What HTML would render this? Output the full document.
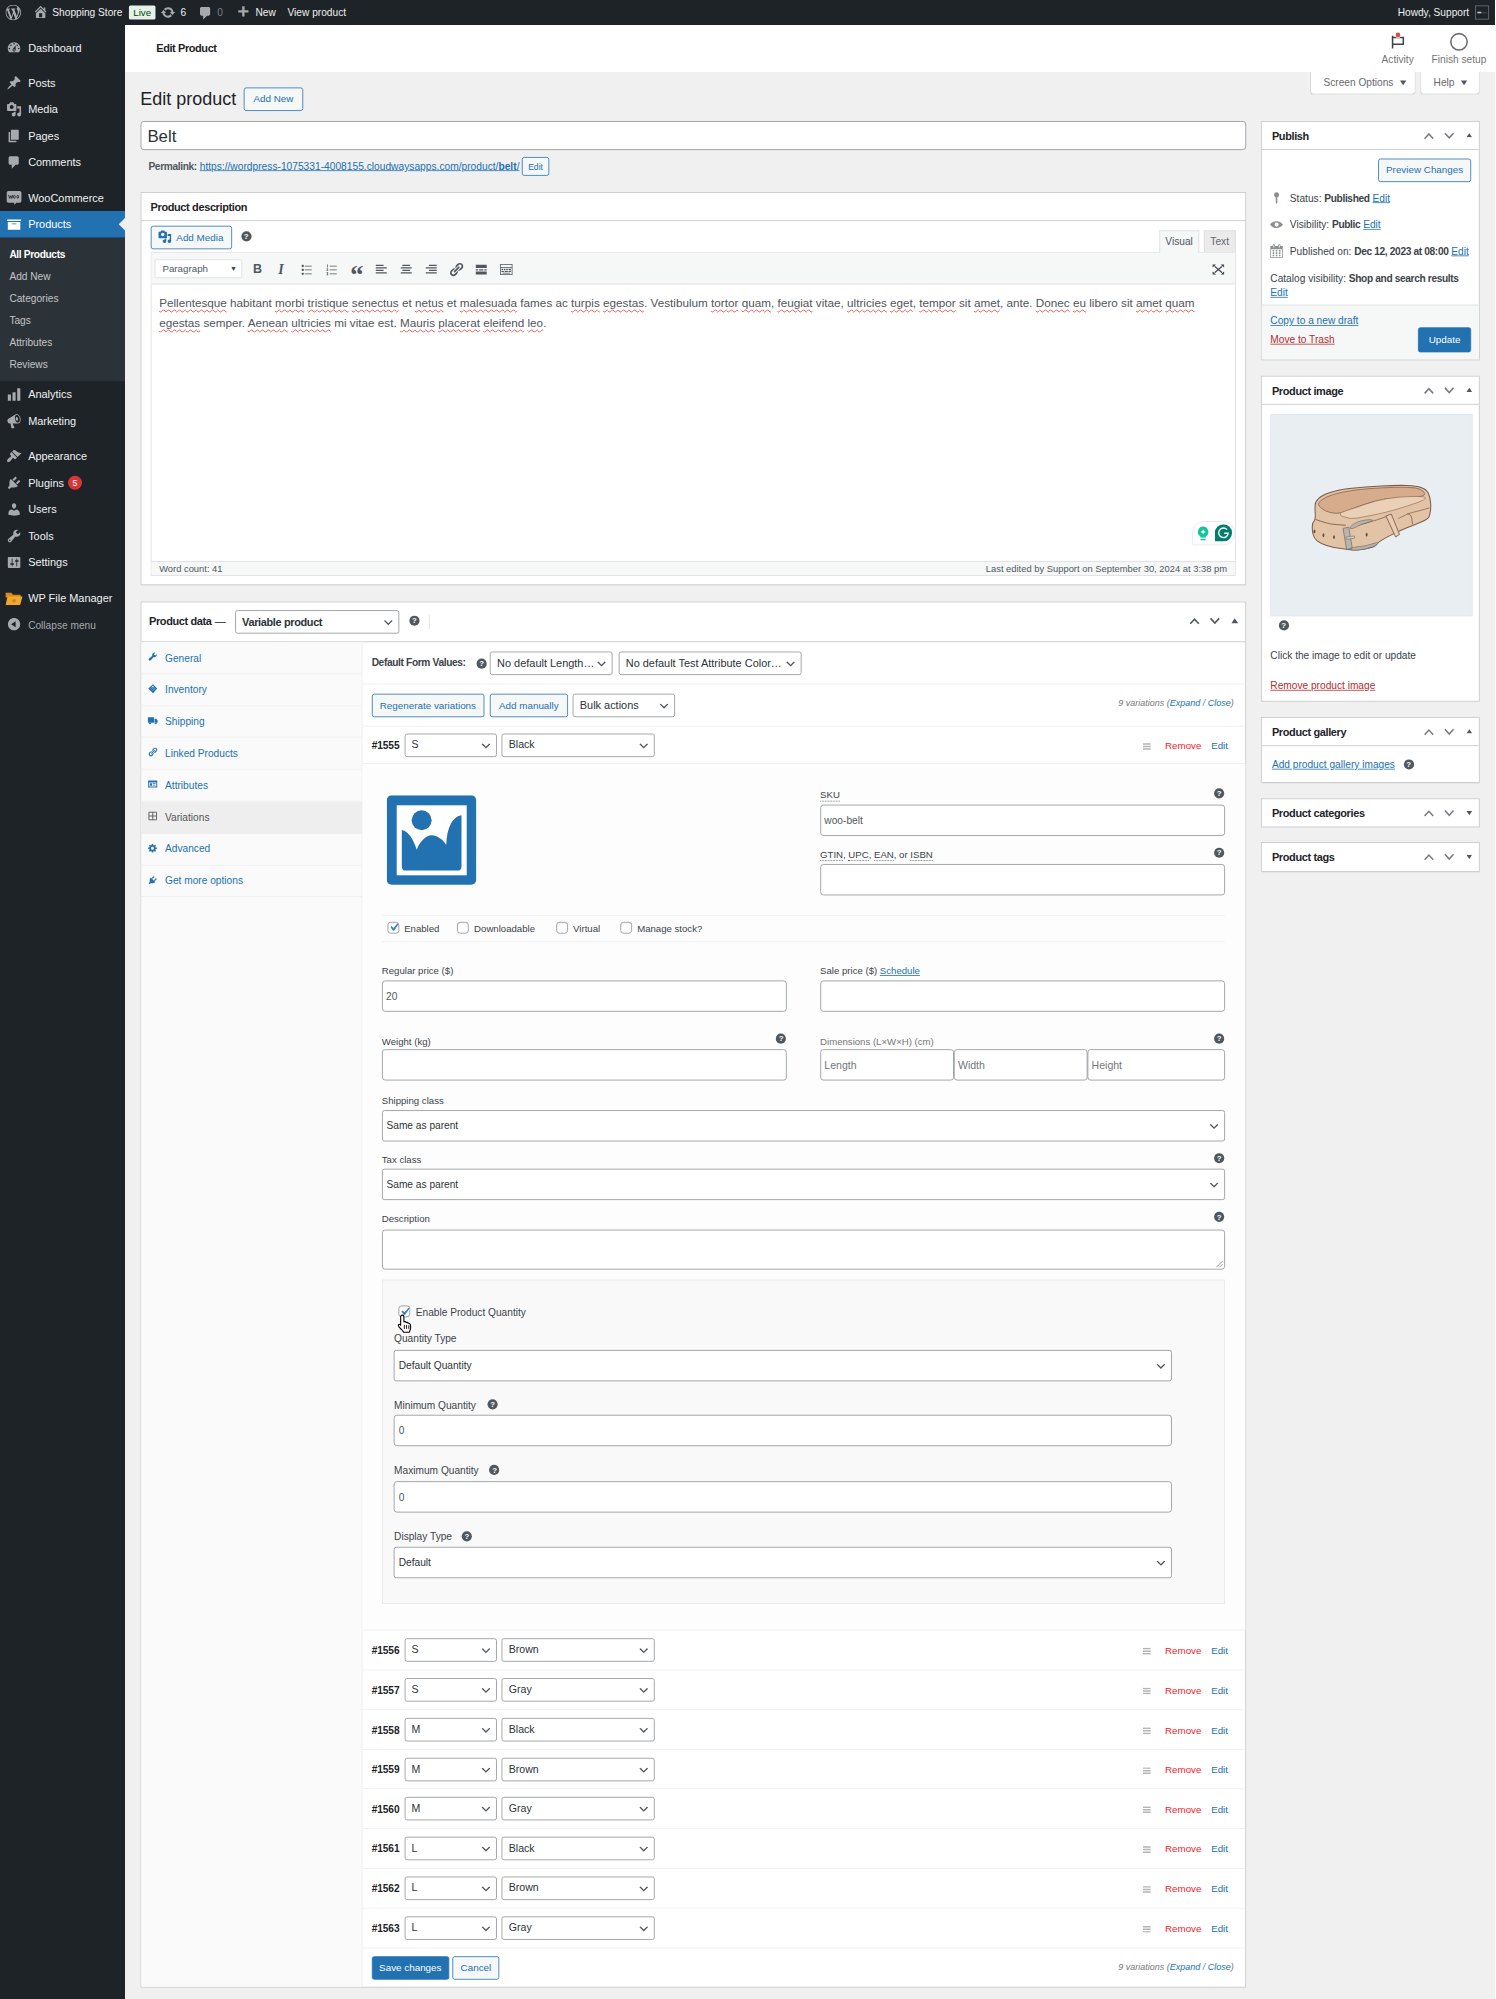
<!DOCTYPE html>
<html lang="en">
<head>
<meta charset="utf-8">
<title>Edit product "Belt" - Shopping Store - WordPress</title>
<style>
html,body{margin:0;padding:0}
body{width:1496px;height:1999px;overflow:hidden;background:#f0f0f1;position:relative}
#scale{position:relative;width:1915px;height:2559px;transform:scale(.78125);transform-origin:0 0;overflow:hidden;background:#f0f0f1;font-family:"Liberation Sans",sans-serif;font-size:13px;line-height:1.4;color:#3c434a}
#scale *{box-sizing:border-box}
a{color:#2271b1;text-decoration:underline}
.abs{position:absolute}
svg{display:block}
.dd{display:inline-block;width:0;height:0;border-left:4.500px solid transparent;border-right:4.500px solid transparent;border-top:6px solid #50575e;margin-left:5px;position:relative;top:-1px}
b,.ph,.bd{font-weight:bold;letter-spacing:-.45px}
#edtxt u{text-decoration:underline wavy #f5392f;text-decoration-thickness:1.300px;text-underline-offset:2.500px;text-decoration-skip-ink:none}
/* admin bar */
#wpadminbar{position:absolute;left:0;top:0;width:1915px;height:32px;background:#1d2327;color:#f0f0f1;font-size:13px;line-height:32px;white-space:nowrap}
#wpadminbar .t{position:absolute;top:0;height:32px;line-height:34px}
#wpadminbar svg{position:absolute;fill:#a7aaad}
/* sidebar */
#adminmenu{position:absolute;left:0;top:32px;width:160px;height:2527px;background:#1d2327;padding-top:12px}
.mi{position:relative;height:34px;color:#f0f0f1;font-size:14px;line-height:18px;padding:8px 0 8px 36px;white-space:nowrap}
.mi svg{position:absolute;left:8px;top:7px;width:20px;height:20px;fill:#a7aaad}
.mi.cur{background:#2271b1;color:#fff}
.mi.cur svg{fill:#fff}
.mi.cur:after{content:"";position:absolute;right:0;top:9px;border:8px solid transparent;border-right-color:#f0f0f1}
.sep{height:11px}
.sub{background:#2c3338;padding:7px 0 8px}
.sub div{font-size:13px;line-height:18.2px;padding:6.300px 12px 3.700px;color:#c3c4c7;height:28.2px}
.sub div.on{color:#fff;font-weight:bold;letter-spacing:-.45px}
.badge{display:inline-block;background:#d63638;color:#fff;font-size:11px;line-height:18px;height:18px;min-width:18px;border-radius:9px;text-align:center;margin:0 0 0 5px;vertical-align:top;padding:0 5px}
/* generic */
.postbox{position:absolute;background:#fff;border:1px solid #c3c4c7;box-shadow:0 1px 1px rgba(0,0,0,.04)}
.ph{position:relative;height:36px;border-bottom:1px solid #c3c4c7;font-size:14px;font-weight:bold;color:#1d2327;line-height:19px;padding:9.300px 12px 0}
.side .ph{padding-left:13px}
.ph.closed{border-bottom:0}
.hd{position:absolute;top:0;height:35px}
.hd svg{position:absolute;top:10px}
.btn{position:absolute;border:1px solid #2271b1;border-radius:3px;background:#f6f7f7;color:#2271b1;font-size:12.600px;line-height:28px;height:30px;text-align:center;white-space:nowrap}
.btn.pri{background:#2271b1;color:#fff}
.inp{position:absolute;border:1px solid #8c8f94;border-radius:4px;background:#fff;color:#2c3338;font-size:14px;white-space:nowrap;overflow:hidden}
.sel{position:absolute;border:1px solid #8c8f94;border-radius:3px;background:#fff;color:#2c3338;font-size:14px;line-height:28px;height:30px;padding:0 24px 0 8px;white-space:nowrap;overflow:hidden}
.sel svg{position:absolute;right:5px;top:50%;margin-top:-7px;width:16px;height:16px}
.lbl{position:absolute;font-size:12.300px;line-height:16px;color:#3c434a;white-space:nowrap}
.tip{position:absolute;width:13px;height:13px;border-radius:50%;background:#50575e;color:#fff;font-size:10px;font-weight:bold;line-height:13px;text-align:center}
.cb{position:absolute;width:15px;height:15px;border:1px solid #8c8f94;border-radius:4px;background:#fff;box-shadow:inset 0 1px 2px rgba(0,0,0,.1)}
.cb svg{position:absolute;left:-3.500px;top:-3.500px;width:20px;height:20px}
</style>
</head>
<body>
<div id="scale">

<!-- ============ ADMIN BAR ============ -->
<div id="wpadminbar">
  <svg style="left:7px;top:6px" width="20" height="20" viewBox="0 0 20 20"><path d="M20 10c0-5.51-4.49-10-10-10C4.48 0 0 4.49 0 10c0 5.52 4.48 10 10 10 5.51 0 10-4.48 10-10zM7.78 15.37L4.37 6.22c.55-.02 1.17-.08 1.17-.08.5-.06.44-1.13-.06-1.11 0 0-1.45.11-2.37.11-.18 0-.37 0-.58-.01C4.12 2.69 6.87 1.11 10 1.11c2.33 0 4.45.87 6.05 2.34-.68-.11-1.65.39-1.65 1.58 0 .74.45 1.36.9 2.1.35.61.55 1.36.55 2.46 0 1.49-1.4 5-1.4 5l-3.03-8.37c.54-.02.82-.17.82-.17.5-.05.44-1.25-.06-1.22 0 0-1.44.12-2.38.12-.87 0-2.33-.12-2.33-.12-.5-.03-.56 1.2-.06 1.22l.92.08 1.26 3.41zM17.41 10c.24-.64.74-1.87.43-4.25.7 1.29 1.05 2.71 1.05 4.25 0 3.29-1.73 6.24-4.4 7.78.97-2.59 1.94-5.2 2.92-7.78zM6.1 18.09C3.12 16.65 1.11 13.53 1.11 10c0-1.3.23-2.48.72-3.59C3.25 10.3 4.67 14.2 6.1 18.09zm4.03-6.63l2.58 6.98c-.86.29-1.76.45-2.71.45-.79 0-1.57-.11-2.29-.33.81-2.38 1.62-4.74 2.42-7.1z"/></svg>
  <svg style="left:42px;top:5px" width="20" height="20" viewBox="0 0 20 20"><path d="M16 8.5l1.53 1.53-1.06 1.06L10 4.62l-6.47 6.47-1.06-1.06L10 2.5l4 4v-2h2v4zm-6-2.46l6 5.99V18H4v-5.97zM12 17v-5H8v5h4z"/></svg>
  <span class="t" style="left:67px">Shopping Store</span>
  <span class="t" style="left:165px;top:7px;height:18px;line-height:18px;width:34px;text-align:center;background:#e6f2e8;color:#00450c;border-radius:2px;font-size:12.5px">Live</span>
  <svg style="left:205px;top:6px" width="20" height="20" viewBox="0 0 20 20"><path d="M10.2 3.28c3.53 0 6.43 2.61 6.92 6h2.08l-3.5 4-3.5-4h2.32c-.45-1.97-2.21-3.45-4.32-3.45-1.45 0-2.73.71-3.54 1.78L4.95 5.66C6.23 4.2 8.11 3.28 10.2 3.28zm-.4 13.44c-3.52 0-6.43-2.61-6.92-6H.8l3.5-4c1.17 1.33 2.33 2.67 3.5 4H5.48c.45 1.97 2.21 3.45 4.32 3.45 1.45 0 2.73-.71 3.54-1.78l1.71 1.95c-1.28 1.46-3.15 2.38-5.25 2.38z"/></svg>
  <span class="t" style="left:231px">6</span>
  <svg style="left:253px;top:7px" width="20" height="20" viewBox="0 0 20 20"><path d="M5 2h9c1.1 0 2 .9 2 2v7c0 1.1-.9 2-2 2h-2l-5 5v-5H5c-1.1 0-2-.9-2-2V4c0-1.1.9-2 2-2z"/></svg>
  <span class="t" style="left:278px;color:#a7aaad;opacity:.7">0</span>
  <svg style="left:301px;top:6px" width="20" height="20" viewBox="0 0 20 20"><path d="M17 7v3h-5v5H9v-5H4V7h5V2h3v5h5z"/></svg>
  <span class="t" style="left:327px">New</span>
  <span class="t" style="left:368px">View product</span>
  <span class="t" style="left:1789px">Howdy, Support</span>
  <div class="abs" style="left:1888px;top:7px;width:18px;height:18px;border:1px solid #70757a"><div class="abs" style="left:2px;top:7.500px;width:12px;height:1px;background:#50575e"></div><div class="abs" style="left:2px;top:7px;width:5px;height:2px;background:#c3c4c7"></div></div>
</div>

<!-- ============ SIDEBAR ============ -->
<div id="adminmenu">
  <div class="mi"><svg viewBox="0 0 20 20"><path d="M3.76 16h12.48c1.1-1.37 1.76-3.11 1.76-5 0-4.42-3.58-8-8-8s-8 3.58-8 8c0 1.89.66 3.63 1.76 5zM10 4c.55 0 1 .45 1 1s-.45 1-1 1-1-.45-1-1 .45-1 1-1zM6 6c.55 0 1 .45 1 1s-.45 1-1 1-1-.45-1-1 .45-1 1-1zm8 0c.55 0 1 .45 1 1s-.45 1-1 1-1-.45-1-1 .45-1 1-1zm-5.37 5.55L12 7v6c0 1.1-.9 2-2 2s-2-.9-2-2c0-.57.24-1.08.63-1.45zM4 10c.55 0 1 .45 1 1s-.45 1-1 1-1-.45-1-1 .45-1 1-1zm12 0c.55 0 1 .45 1 1s-.45 1-1 1-1-.45-1-1 .45-1 1-1zm-5 3c0-.55-.45-1-1-1s-1 .45-1 1 .45 1 1 1 1-.45 1-1z"/></svg>Dashboard</div>
  <div class="sep"></div>
  <div class="mi"><svg viewBox="0 0 20 20"><path d="M10.44 3.02l1.82-1.82 6.36 6.35-1.83 1.82c-1.05-.68-2.48-.57-3.41.36l-.75.75c-.92.93-1.04 2.35-.35 3.41l-1.83 1.82-2.41-2.41-2.8 2.79c-.42.42-3.38 2.71-3.8 2.29s1.86-3.39 2.28-3.81l2.79-2.79L4.1 9.36l1.83-1.82c1.05.69 2.48.57 3.4-.36l.75-.75c.93-.92 1.05-2.35.36-3.41z"/></svg>Posts</div>
  <div class="mi"><svg viewBox="0 0 20 20"><path d="M13 11V4c0-.55-.45-1-1-1h-1.67L9 1H5L3.67 3H2c-.55 0-1 .45-1 1v7c0 .55.45 1 1 1h10c.55 0 1-.45 1-1zM7 4.5c1.38 0 2.5 1.12 2.5 2.5S8.38 9.5 7 9.5 4.5 8.38 4.5 7 5.62 4.5 7 4.5zM14 6h5v10.5c0 1.38-1.12 2.5-2.5 2.5S14 17.880 14 16.5s1.12-2.5 2.5-2.5c.17 0 .34.02.5.05V9h-3V6zm-4 8.050V13h2v3.5c0 1.38-1.12 2.5-2.500 2.5S7 17.880 7 16.5 8.120 14 9.500 14c.17 0 .34.02.5.05z"/></svg>Media</div>
  <div class="mi"><svg viewBox="0 0 20 20"><path d="M6 15V2h10v13H6zm-1 1h8v2H3V5h2v11z"/></svg>Pages</div>
  <div class="mi"><svg viewBox="0 0 20 20"><path d="M5 2h9c1.1 0 2 .9 2 2v7c0 1.1-.9 2-2 2h-2l-5 5v-5H5c-1.1 0-2-.9-2-2V4c0-1.1.9-2 2-2z"/></svg>Comments</div>
  <div class="sep"></div>
  <div class="mi"><svg viewBox="0 0 20 20"><path d="M3 1.500h14c1.400 0 2.500 1.100 2.500 2.500v10c0 1.400-1.100 2.500-2.500 2.500h-4.500l-1.500 2.500-1.500-2.500H3c-1.400 0-2.500-1.100-2.500-2.500V4c0-1.400 1.100-2.500 2.500-2.500z"/><path d="M3 6.500l1.300 4.500 1.500-3.500 1.400 3.500 1-4.500M10.400 7c-1.500 0-1.500 3.800 0 3.800s1.500-3.800 0-3.800zM14.800 7c-1.500 0-1.500 3.800 0 3.800s1.500-3.800 0-3.800z" fill="none" stroke="#1d2327" stroke-width="1.100"/></svg>WooCommerce</div>
  <div class="mi cur"><svg viewBox="0 0 20 20"><path d="M19 4v2H1V4h18zM2 7h16v10H2V7zm11 3V9H7v1h6z"/></svg>Products</div>
  <div class="sub">
    <div class="on">All Products</div>
    <div>Add New</div>
    <div>Categories</div>
    <div>Tags</div>
    <div>Attributes</div>
    <div>Reviews</div>
  </div>
  <div class="mi"><svg viewBox="0 0 20 20"><path d="M18 18V2h-4v16h4zm-6 0V7H8v11h4zm-6 0v-8H2v8h4z"/></svg>Analytics</div>
  <div class="mi"><svg viewBox="0 0 20 20"><path d="M18.15 5.94c.46 1.62.38 3.22-.02 4.48-.42 1.28-1.26 2.18-2.3 2.48-.16.06-.26.06-.4.06-.06.02-.12.02-.18.02-.06.02-.14.02-.22.02h-6.8l2.22 5.5c.02.14-.06.26-.14.34-.08.1-.24.16-.34.16H6.950c-.1 0-.26-.06-.34-.16-.08-.08-.16-.2-.14-.34l-1-5.5H4.250l-.02-.02c-.5.06-1.08-.18-1.54-.62s-.88-1.08-1.06-1.88c-.24-.8-.2-1.56-.02-2.2.18-.62.58-1.08 1.06-1.3l.02-.02 9-5.4c.1-.06.18-.1.24-.16.06-.04.14-.08.24-.12.16-.08.28-.12.5-.18 1.04-.3 2.24.1 3.22.98s1.84 2.24 2.26 3.86zm-2.58 5.98h-.02c.4-.1.74-.34 1.04-.7.58-.7.86-1.76.86-3.04 0-.64-.1-1.3-.28-1.98-.34-1.36-1.02-2.5-1.78-3.24s-1.68-1.1-2.46-.88c-.82.22-1.4.96-1.7 2-.32 1.04-.28 2.36.06 3.72.38 1.36 1 2.5 1.8 3.24.78.74 1.62 1.1 2.48.88zm-2.54-7.08c.22-.04.42-.02.62.04.38.16.76.48 1.02 1s.42 1.2.42 1.78c0 .3-.04.56-.12.8-.18.48-.44.84-.86.94-.34.1-.8-.06-1.14-.4s-.64-.86-.78-1.5c-.18-.62-.12-1.24.02-1.72s.48-.84.82-.94z"/></svg>Marketing</div>
  <div class="sep"></div>
  <div class="mi"><svg viewBox="0 0 20 20"><path d="M14.48 11.06L7.41 3.99l1.5-1.5c.5-.56 2.3-.47 3.51.32 1.21.8 1.43 1.28 2.91 2.1 1.18.64 2.45 1.26 4.45.85zm-.71.71L6.7 4.7 4.93 6.47c-.39.39-.39 1.02 0 1.41l1.06 1.06c.39.39.39 1.03 0 1.42-.6.6-1.43 1.11-2.21 1.69-.35.26-.7.53-1.01.84C1.43 14.23.4 16.08 1.4 17.07c.99 1 2.84-.03 4.18-1.36.31-.31.58-.66.85-1.02.57-.78 1.08-1.61 1.69-2.21.39-.39 1.02-.39 1.41 0l1.06 1.06c.39.39 1.02.39 1.41 0z"/></svg>Appearance</div>
  <div class="mi"><svg viewBox="0 0 20 20"><path d="M13.11 4.36L9.87 7.6 8 5.73l3.24-3.24c.35-.34 1.05-.2 1.56.32.52.51.66 1.21.31 1.55zm-8 1.77l.91-1.12 9.01 9.01-1.19.84c-.71.71-2.63 1.16-3.82 1.16H6.14L4.9 17.26c-.59.59-1.54.59-2.12 0-.59-.58-.59-1.53 0-2.12l1.24-1.24v-3.88c0-1.13.4-3.19 1.09-3.89zm7.26 3.97l3.24-3.24c.34-.35 1.04-.21 1.55.31.52.51.66 1.21.31 1.55l-3.24 3.25z"/></svg>Plugins<span class="badge">5</span></div>
  <div class="mi"><svg viewBox="0 0 20 20"><path d="M10 9.25c-2.27 0-2.73-3.44-2.73-3.44C7 4.02 7.82 2 9.97 2c2.16 0 2.98 2.02 2.71 3.81 0 0-.41 3.44-2.68 3.44zm0 2.57L12.72 10c2.39 0 4.52 2.33 4.52 4.53v2.49s-3.65 1.13-7.24 1.13c-3.65 0-7.24-1.13-7.24-1.13v-2.49c0-2.25 1.94-4.48 4.47-4.48z"/></svg>Users</div>
  <div class="mi"><svg viewBox="0 0 20 20"><path d="M16.68 9.77c-1.34 1.34-3.3 1.67-4.95.99l-5.41 6.52c-.99.99-2.59.99-3.58 0s-.99-2.59 0-3.57l6.52-5.42c-.68-1.65-.35-3.61.99-4.95 1.28-1.28 3.12-1.62 4.72-1.06l-2.89 2.89 2.82 2.82 2.86-2.87c.53 1.58.18 3.39-1.08 4.65zM3.81 16.21c.4.39 1.04.39 1.43 0 .4-.4.4-1.04 0-1.43-.39-.4-1.03-.4-1.43 0-.39.39-.39 1.03 0 1.43z"/></svg>Tools</div>
  <div class="mi"><svg viewBox="0 0 20 20"><path d="M18 16V4c0-.55-.45-1-1-1H3c-.55 0-1 .45-1 1v12c0 .55.45 1 1 1h14c.55 0 1-.45 1-1zM8 11h1c.55 0 1 .45 1 1s-.45 1-1 1H8v1.5c0 .28-.22.5-.5.5s-.5-.22-.5-.5V13H6c-.55 0-1-.45-1-1s.45-1 1-1h1V5.500c0-.28.22-.5.5-.5s.5.22.5.5V11zm5-2h-1c-.55 0-1-.45-1-1s.45-1 1-1h1V5.500c0-.28.22-.5.5-.5s.5.22.5.5V7h1c.55 0 1 .45 1 1s-.45 1-1 1h-1v5.500c0 .28-.22.5-.5.5s-.5-.22-.5-.5V9z"/></svg>Settings</div>
  <div class="sep"></div>
  <div class="mi"><svg viewBox="0 0 20 20" style="left:6px;top:6px;width:24px;height:24px"><path d="M1 4h6l2 2h8v3H1z" fill="#d98a1f"/><path d="M3 8h16l-2.500 9H1z" fill="#f0a92f"/><circle cx="10" cy="12.500" r="2.200" fill="#d98a1f"/></svg>WP File Manager</div>
  <div class="mi" style="color:#a7aaad;font-size:13px;padding-top:10px"><svg viewBox="0 0 20 20"><path d="M10 2.160c4.33 0 7.84 3.51 7.84 7.84s-3.510 7.840-7.840 7.840S2.160 14.330 2.160 10 5.670 2.160 10 2.160zm2 11.720V6.120L6.180 9.970z"/></svg>Collapse menu</div>
</div>

<!-- ============ WC HEADER ============ -->
<div class="abs" style="left:160px;top:32px;width:1755px;height:60px;background:#fff">
  <div class="abs bd" style="left:40px;top:0;line-height:61px;font-size:14px;color:#1e1e1e;letter-spacing:-.5px">Edit Product</div>
  <svg class="abs" style="left:1617px;top:8px" width="24" height="24" viewBox="0 0 24 24"><path d="M5.500 5.700V22M5.500 8.100H19.200V16.700H5.500" fill="none" stroke="#3c434a" stroke-width="2"/><circle cx="12.400" cy="4.700" r="3.700" fill="#fff"/><circle cx="12.400" cy="4.700" r="3" fill="#dd4a4a"/></svg>
  <div class="abs" style="left:1589px;top:35.500px;width:80px;text-align:center;font-size:13px;line-height:16px;color:#757575">Activity</div>
  <div class="abs" style="left:1695.500px;top:10px;width:23px;height:23px;border:2px solid #6e6e6e;border-radius:50%"></div>
  <div class="abs" style="left:1657.500px;top:35.500px;width:100px;text-align:center;font-size:13px;line-height:16px;color:#757575">Finish setup</div>
</div>

<!-- ============ SCREEN META ============ -->
<div class="abs" style="left:1677px;top:92px;width:135px;height:29px;background:#fff;border:1px solid #c3c4c7;border-top:0;border-radius:0 0 4px 4px;font-size:13px;line-height:27px;color:#646970;padding-left:16px">Screen Options <span class="dd"></span></div>
<div class="abs" style="left:1818px;top:92px;width:76px;height:29px;background:#fff;border:1px solid #c3c4c7;border-top:0;border-radius:0 0 4px 4px;font-size:13px;line-height:27px;color:#646970;padding-left:16px">Help <span class="dd"></span></div>

<!-- ============ HEADING ============ -->
<div class="abs" style="left:179.500px;top:112px;font-size:23px;line-height:30px;color:#1d2327;white-space:nowrap">Edit product</div>
<div class="btn" style="left:312px;top:112px;width:76px;height:30px;line-height:28px">Add New</div>

<div class="inp" style="left:179.700px;top:155px;width:1415px;height:37px;font-size:21.500px;line-height:38.500px;padding:0 8px;color:#2c3338">Belt</div>
<div class="abs" style="left:190px;top:201.300px;line-height:24px;font-size:13px;color:#646970;white-space:nowrap"><b style="font-weight:bold;color:#50575e">Permalink:</b> <a style="font-size:13.080px">https://wordpress-1075331-4008155.cloudwaysapps.com/product/<span style="font-weight:bold">belt</span>/</a></div>
<div class="btn" style="left:668px;top:201px;width:35px;height:24px;line-height:22px;font-size:11px">Edit</div>

<!-- ============ PRODUCT DESCRIPTION ============ -->
<div class="postbox" style="left:179.700px;top:246px;width:1415px;height:503px">
  <div class="ph">Product description</div>
  <div class="btn" style="left:12px;top:42px;width:104px;height:30px;text-align:left;padding-left:32px">Add Media
    <svg class="abs" style="left:8px;top:4px;fill:#2271b1" width="18" height="18" viewBox="0 0 20 20"><path d="M13 11V4c0-.55-.45-1-1-1h-1.67L9 1H5L3.67 3H2c-.55 0-1 .45-1 1v7c0 .55.45 1 1 1h10c.55 0 1-.45 1-1zM7 4.5c1.38 0 2.5 1.12 2.5 2.5S8.38 9.5 7 9.5 4.5 8.38 4.5 7 5.62 4.5 7 4.5zM14 6h5v10.5c0 1.38-1.12 2.5-2.5 2.5S14 17.880 14 16.5s1.12-2.5 2.5-2.5c.17 0 .34.02.5.05V9h-3V6zm-4 8.050V13h2v3.500c0 1.380-1.120 2.500-2.500 2.500S7 17.880 7 16.500 8.120 14 9.500 14c.17 0 .34.02.5.05z"/></svg></div>
  <div class="tip" style="left:128px;top:49.400px">?</div>
  <!-- tabs -->
  <div class="abs" style="left:1303px;top:48px;width:51px;height:29px;background:#f6f7f7;border:1px solid #dcdcde;border-bottom:0;font-size:13px;line-height:28px;text-align:center;color:#50575e;z-index:2">Visual</div>
  <div class="abs" style="left:1360px;top:48px;width:41px;height:28px;background:#ebebeb;border:1px solid #dcdcde;border-bottom:0;font-size:13px;line-height:28px;text-align:center;color:#646970">Text</div>
  <!-- editor container -->
  <div class="abs" style="left:12px;top:76px;width:1389px;height:414px;border:1px solid #dcdcde;background:#fff">
    <div class="abs" style="left:0;top:0;width:1387px;height:40px;background:#f6f7f7;border-bottom:1px solid #dcdcde">
      <div class="abs" style="left:4.700px;top:8px;width:112px;height:24px;background:#fff;border:1px solid #dcdcde;border-radius:2px;font-size:12.500px;line-height:22px;padding-left:8.500px;color:#50575e">Paragraph<span class="abs" style="right:6px;top:0;font-size:9px;color:#3c434a">&#9660;</span></div>
      <div class="abs" style="left:124px;top:9px;width:24px;text-align:center;font-size:16px;line-height:24px;font-weight:bold;color:#50575e">B</div>
      <div class="abs" style="left:154px;top:9px;width:24px;text-align:center;font-size:18px;line-height:24px;font-style:italic;font-weight:bold;font-family:'Liberation Serif',serif;color:#50575e">I</div>
      <svg class="abs" style="left:188.7px;top:10.500px" width="20" height="20" viewBox="0 0 20 20" fill="#50575e"><path d="M5.5 7C4.67 7 4 6.33 4 5.5 4 4.68 4.67 4 5.5 4 6.32 4 7 4.68 7 5.5 7 6.33 6.32 7 5.5 7zM8 5h9v1H8V5zm-2.500 7c-.83 0-1.500-.67-1.500-1.500C4 9.680 4.670 9 5.500 9c.82 0 1.500.68 1.500 1.500 0 .83-.68 1.500-1.500 1.500zM8 10h9v1H8v-1zm-2.500 7c-.83 0-1.500-.67-1.500-1.500 0-.82.67-1.500 1.500-1.500.82 0 1.500.68 1.500 1.500 0 .83-.68 1.500-1.500 1.500zM8 15h9v1H8v-1z"/></svg>
      <svg class="abs" style="left:220.7px;top:10.500px" width="20" height="20" viewBox="0 0 20 20" fill="#50575e"><path d="M8 5h9v1H8zM8 10h9v1H8zM8 15h9v1H8zM4.500 3.500h1v4h-1zM4 8.800h2v1l-1.200 1.300H6v.8H4v-.8l1.200-1.400H4zM4 13.500h2v3.800H4v-.8h1.200v-.7H4.500v-.8h.7v-.7H4z"/></svg>
      <div class="abs" style="left:250px;top:10px;width:26px;text-align:center;font-size:34px;line-height:38px;font-weight:bold;font-family:'Liberation Serif',serif;color:#50575e">&#8220;</div>
      <svg class="abs" style="left:284.7px;top:10.500px" width="20" height="20" viewBox="0 0 20 20" fill="#50575e"><path d="M3 4h10v1.600H3zM3 7.200h14v1.600H3zM3 10.400h10v1.600H3zM3 13.600h14v1.600H3z"/></svg>
      <svg class="abs" style="left:316.7px;top:10.500px" width="20" height="20" viewBox="0 0 20 20" fill="#50575e"><path d="M5 4h10v1.600H5zM3 7.200h14v1.600H3zM5 10.400h10v1.600H5zM3 13.600h14v1.600H3z"/></svg>
      <svg class="abs" style="left:348.7px;top:10.500px" width="20" height="20" viewBox="0 0 20 20" fill="#50575e"><path d="M7 4h10v1.600H7zM3 7.200h14v1.600H3zM7 10.400h10v1.600H7zM3 13.600h14v1.600H3z"/></svg>
      <svg class="abs" style="left:380.7px;top:10.500px" width="20" height="20" viewBox="0 0 20 20" fill="#50575e"><path d="M17.740 2.760c1.680 1.690 1.680 4.410 0 6.100l-1.530 1.520c-1.120 1.120-2.700 1.470-4.140 1.090l2.620-2.610.76-.77.760-.76c.84-.84.84-2.200 0-3.040-.84-.85-2.200-.85-3.040 0l-.77.760-3.380 3.380c-.37-1.440-.02-3.020 1.100-4.140l1.520-1.530c1.690-1.680 4.420-1.680 6.100 0zM8.590 13.430l5.340-5.340c.42-.42.420-1.100 0-1.520-.44-.43-1.130-.39-1.530 0l-5.330 5.340c-.42.42-.42 1.100 0 1.520.44.430 1.130.39 1.520 0zm-.76 2.290l4.140-4.150c.38 1.440.03 3.020-1.090 4.140l-1.520 1.530c-1.690 1.680-4.410 1.680-6.100 0-1.680-1.680-1.680-4.420 0-6.100l1.530-1.520c1.120-1.120 2.700-1.470 4.140-1.100l-4.140 4.150c-.85.84-.85 2.200 0 3.050.84.840 2.200.840 3.040 0z"/></svg>
      <svg class="abs" style="left:412.7px;top:10.500px" width="20" height="20" viewBox="0 0 20 20" fill="#50575e"><path d="M3 4h14v4H3zM3 9.500h3v1.600H3zM7.300 9.500h5.400v1.600H7.300zM14 9.500h3v1.600H14zM3 12.500h14v4H3z"/></svg>
      <svg class="abs" style="left:444.7px;top:10.500px" width="20" height="20" viewBox="0 0 20 20" fill="#50575e"><path d="M2 3h16v14H2V3zm1 1v3h14V4H3zm0 4v8h14V8H3zm1 1h2v2H4V9zm3 0h2v2H7V9zm3 0h2v2h-2V9zm3 0h3v2h-3V9zM4 12h3v1H4zM8 12h4v1H8zM13 12h3v1h-3zM5 14h10v1H5z" fill-rule="evenodd"/></svg>
      <svg class="abs" style="left:1355.500px;top:11.500px" width="21" height="18" viewBox="0 0 20 20" preserveAspectRatio="none" fill="#3c434a"><path d="M5.500 5.500l9 9M14.500 5.500l-9 9" stroke="#3c434a" stroke-width="1.700" fill="none"/><path d="M3 3h4.200L3 7.200zM17 3v4.200L12.800 3zM3 17v-4.200L7.200 17zM17 17h-4.200L17 12.800z"/></svg>
    </div>
    <div id="edtxt" class="abs" style="left:10px;top:50.800px;width:1370px;font-size:14.990px;line-height:25px;color:#50555c;white-space:nowrap"><u>Pellentesque</u> habitant <u>morbi</u> <u>tristique</u> <u>senectus</u> et <u>netus</u> et <u>malesuada</u> fames ac <u>turpis</u> <u>egestas</u>. Vestibulum <u>tortor</u> <u>quam</u>, <u>feugiat</u> vitae, <u>ultricies</u> <u>eget</u>, <u>tempor</u> sit <u>amet</u>, ante. <u>Donec</u> <u>eu</u> libero sit <u>amet</u> <u>quam</u><br><u>egestas</u> semper. <u>Aenean</u> <u>ultricies</u> mi vitae est. <u>Mauris</u> <u>placerat</u> <u>eleifend</u> <u>leo</u>.</div>
    <!-- grammarly -->
    <div class="abs" style="left:1332px;top:343.400px;width:55px;height:30.300px;border:1px solid #e4e6f0;border-radius:15px 15px 15px 2px;background:#fff"></div>
    <svg class="abs" style="left:1334.800px;top:347.300px" width="24" height="24" viewBox="0 0 22 22"><path d="M11 2.800a6.200 6.200 0 0 0-3.300 11.400V15.500h6.600v-1.300A6.200 6.200 0 0 0 11 2.800z" fill="#15c39a"/><path d="M11 5.800l.9 2.300 2.300.9-2.300.9-.9 2.300-.9-2.300-2.300-.9 2.300-.9z" fill="#fff"/><path d="M8 17h6v1.800H8z" fill="#15c39a"/></svg>
    <svg class="abs" style="left:1361.100px;top:347.400px" width="22" height="22" viewBox="0 0 22 22"><path d="M0 11a11 11 0 1 1 11 11H0z" fill="#027e6f"/><path d="M15.600 6.900A6.100 6.100 0 1 0 17.100 11.600H12" fill="none" stroke="#fff" stroke-width="1.700"/></svg>
    <!-- status bar -->
    <div class="abs" style="left:0;top:394px;width:1387px;height:18px;background:#f6f7f7;border-top:1px solid #dcdcde;font-size:12px;line-height:19.500px;color:#50575e"><span class="abs" style="left:10px">Word count: 41</span><span class="abs" style="right:10px;white-space:nowrap">Last edited by Support on September 30, 2024 at 3:38 pm</span></div>
  </div>
</div>

<!-- ============ SIDE COLUMN ============ -->
<!-- handle icon template: up, down, toggle -->
<div class="postbox side" style="left:1614px;top:155px;width:280px;height:306px">
  <div class="ph">Publish
    <svg class="abs" style="left:207px;top:11.600px" width="14" height="12" viewBox="0 0 14 12"><path d="M1.500 9.500L7 3.500l5.500 6" fill="none" stroke="#787c82" stroke-width="2"/></svg>
    <svg class="abs" style="left:232.500px;top:11.600px" width="14" height="12" viewBox="0 0 14 12"><path d="M1.500 2.500L7 8.500l5.500-6" fill="none" stroke="#787c82" stroke-width="2"/></svg>
    <svg class="abs" style="left:261.700px;top:14px" width="7.500" height="5.800" viewBox="0 0 9 7"><path d="M0 7L4.500 .5 9 7z" fill="#50575e"/></svg>
  </div>
  <div class="btn" style="left:149px;top:47px;width:119px;height:30px">Preview Changes</div>
  <svg class="abs" style="left:9px;top:87px;fill:#8c8f94" width="20" height="20" viewBox="0 0 20 20"><path d="M10 3.200a3.300 3.300 0 0 1 1 6.450V16.500l-1 1.500-1-1.500V9.650A3.300 3.300 0 0 1 10 3.200z"/></svg>
  <div class="abs" style="left:36px;top:88px;line-height:19px;white-space:nowrap">Status: <b>Published</b> <a>Edit</a></div>
  <svg class="abs" style="left:9px;top:122px;fill:#8c8f94" width="20" height="20" viewBox="0 0 20 20"><path d="M18.300 9.500C15 4.900 8.500 3.800 3.900 7.200 2.700 8.100 1.900 9.300 1.700 9.500c.2.300 1 1.500 2.200 2.400 4.600 3.400 11.100 2.300 14.400-2.400zM10.100 12.100c-1.500 0-2.600-1.200-2.600-2.600S8.700 6.900 10.100 6.900c1.500 0 2.600 1.200 2.600 2.600s-1.200 2.600-2.600 2.600zm4.200-2.600c0 1-.4 1.900-1 2.700 1.300-.6 2.400-1.500 3.300-2.700-.9-1.200-2-2.100-3.300-2.700.7.800 1 1.700 1 2.700zm-8.300 0c0-1 .4-1.900 1-2.700-1.300.6-2.400 1.500-3.300 2.700.9 1.200 2 2.100 3.300 2.700-.7-.8-1-1.700-1-2.700z"/></svg>
  <div class="abs" style="left:36px;top:122px;line-height:19px;white-space:nowrap">Visibility: <b>Public</b> <a>Edit</a></div>
  <svg class="abs" style="left:9px;top:155px;fill:#8c8f94" width="20" height="20" viewBox="0 0 20 20"><path d="M15 4h3v15H2V4h3V3c0-.41.15-.76.44-1.060.29-.29.65-.44 1.060-.44s.77.150 1.060.440c.29.3.44.650.44 1.060v1h4V3c0-.41.150-.76.440-1.060.29-.29.650-.44 1.060-.44s.77.150 1.060.440c.29.3.44.650.44 1.060v1zM6 3v2.500c0 .14.050.26.150.36.090.9.210.14.350.14s.26-.5.350-.14c.1-.1.150-.22.150-.36V3c0-.14-.050-.26-.150-.35-.09-.1-.21-.15-.35-.15s-.26.050-.35.150c-.1.090-.15.210-.15.350zm7 0v2.500c0 .14.050.26.140.36.1.9.220.14.360.14s.26-.5.360-.14c.09-.1.140-.22.140-.36V3c0-.14-.050-.26-.14-.35-.1-.1-.22-.15-.36-.15s-.26.050-.36.150c-.09.090-.14.210-.14.350zm4 15V8H3v10h14zM7 9v2H5V9h2zm2 0h2v2H9V9zm4 2V9h2v2h-2zm-6 1v2H5v-2h2zm2 0h2v2H9v-2zm4 2v-2h2v2h-2zm-6 1v2H5v-2h2zm4 2H9v-2h2v2zm4 0h-2v-2h2v2z"/></svg>
  <div class="abs" style="left:36px;top:156px;line-height:19px;white-space:nowrap">Published on: <b>Dec 12, 2023 at 08:00</b> <a>Edit</a></div>
  <div class="abs" style="left:11px;top:191.500px;line-height:18px;white-space:nowrap">Catalog visibility: <b>Shop and search results</b><br><a>Edit</a></div>
  <div class="abs" style="left:0;top:234px;width:278px;height:70px;background:#f6f7f7;border-top:1px solid #dcdcde"></div>
  <div class="abs" style="left:11px;top:245px;line-height:19px;white-space:nowrap"><a>Copy to a new draft</a></div>
  <div class="abs" style="left:11px;top:269px;line-height:19px;white-space:nowrap"><a style="color:#b32d2e">Move to Trash</a></div>
  <div class="btn pri" style="left:200px;top:263px;width:68px;height:32px;line-height:30px">Update</div>
</div>

<div class="postbox side" style="left:1614px;top:481px;width:280px;height:417px">
  <div class="ph">Product image
    <svg class="abs" style="left:207px;top:11.600px" width="14" height="12" viewBox="0 0 14 12"><path d="M1.500 9.500L7 3.500l5.500 6" fill="none" stroke="#787c82" stroke-width="2"/></svg>
    <svg class="abs" style="left:232.500px;top:11.600px" width="14" height="12" viewBox="0 0 14 12"><path d="M1.500 2.500L7 8.500l5.500-6" fill="none" stroke="#787c82" stroke-width="2"/></svg>
    <svg class="abs" style="left:261.700px;top:14px" width="7.500" height="5.800" viewBox="0 0 9 7"><path d="M0 7L4.500 .5 9 7z" fill="#50575e"/></svg>
  </div>
  <svg class="abs" style="left:11px;top:48px" width="259" height="258.500" viewBox="0 0 259 258.500">
    <rect width="259" height="259" fill="#e9eef3"/>
    <rect x=".5" y=".5" width="258" height="258" fill="none" stroke="#dde3ea"/>
    <path d="M57.3 116.7Q57.5 111.9 62.0 107.8Q66.4 103.6 76.7 100.3Q87.0 97.0 104.2 95.0Q121.3 92.9 141.8 92.0Q162.4 91.0 174.8 91.4Q187.1 91.8 193.6 94.2Q200.1 96.5 202.1 101.1Q204.2 105.7 204.9 111.5Q205.7 117.3 205.1 122.8Q204.4 128.3 203.2 131.4Q201.9 134.5 192.4 138.4Q183.0 142.3 174.1 145.9Q165.1 149.6 156.9 153.7Q148.7 157.8 143.2 161.0Q137.7 164.2 136.3 166.8Q135.0 169.5 128.2 171.2Q121.3 173.0 114.4 173.7Q107.5 174.4 102.0 173.7Q96.6 173.0 88.3 171.9Q80.1 170.8 72.2 168.2Q64.3 165.6 60.0 162.2Q55.7 158.8 54.5 153.2Q53.4 147.5 53.8 143.1Q54.3 138.6 56.1 136.8Q57.9 134.9 57.5 128.2Q57.1 121.5 57.3 116.7z" fill="#e3c3a6" stroke="#7b5b47" stroke-width="1.300"/>
    <path d="M61.6 115.8Q61.2 113.5 65.8 109.8Q70.5 106.1 80.8 102.9Q91.1 99.8 106.2 97.6Q121.3 95.4 141.8 94.5Q162.4 93.5 174.8 93.8Q187.1 94.0 191.9 96.3Q196.7 98.6 197.5 101.8Q198.3 105.0 187.2 106.2Q176.1 107.5 162.4 107.6Q148.7 107.7 135.0 111.3Q121.3 114.9 108.9 119.7Q96.6 124.5 90.4 126.2Q84.2 127.9 77.3 126.2Q70.5 124.5 66.2 121.2Q62.0 118.0 61.6 115.8z" fill="#d6ac8c" stroke="#7b5b47" stroke-width=".9"/>
    <path d="M93.2 131.4Q84.2 127.9 95.8 124.2Q107.5 120.4 121.2 115.6Q135.0 110.8 148.7 108.4Q162.4 106.1 180.1 105.5Q197.8 105.0 198.4 107.2Q199.1 109.4 187.6 113.5Q176.1 117.6 162.4 121.7Q148.7 125.8 135.0 128.6Q121.3 131.3 111.7 133.1Q102.1 134.9 93.2 131.4z" fill="#ead0b6" stroke="#7b5b47" stroke-width=".7"/>
    <path d="M57.9 134.9Q70.5 139.3 77.3 140.6Q84.2 141.8 96.6 142.3" fill="none" stroke="#7b5b47" stroke-width="1.100"/>
    <path d="M107.5 143.7Q128.1 138.2 137.0 135.2Q145.9 132.2 148.7 131.1" fill="none" stroke="#7b5b47" stroke-width="1"/>
    <path d="M163.8 133.8Q176.1 127.2 182.9 125.7Q189.8 124.2 203.5 120.1" fill="none" stroke="#7b5b47" stroke-width=".9"/>
    <path d="M175.4 127.2Q179.9 128.3 180.6 131.4Q181.3 134.5 181.9 140.9" fill="none" stroke="#7b5b47" stroke-width="1"/>
    <path d="M148.0 130.4L154.8 128.0L165.4 154.1L160.3 157.4z" fill="#e9cdb2" stroke="#7b5b47" stroke-width="1.100" stroke-linejoin="round"/>
    <path d="M102.5 146.4Q100.4 145.0 106.7 140.9Q113.0 136.8 121.4 135.7Q129.8 134.5 130.7 135.7Q131.5 136.8 123.7 138.9Q115.8 140.9 110.2 144.4Q104.5 147.8 102.5 146.4z" fill="#b9b4ae" stroke="#6e6862" stroke-width=".8"/>
    <path d="M103.1 172.5Q104.1 170.3 112.7 169.8Q121.3 169.2 129.7 166.4Q138.0 163.7 137.7 165.3Q137.4 167.0 129.3 170.2Q121.3 173.3 111.7 174.0Q102.1 174.7 103.1 172.5z" fill="#b9b4ae" stroke="#6e6862" stroke-width=".8"/>
    <path d="M93.1 146.4L100.4 144.8L104.8 171.1L97.7 173.8z" fill="#b9b4ae" stroke="#6e6862" stroke-width=".9" stroke-linejoin="round"/>
    <path d="M96.8 157.4L107.5 156.0L107.9 158.8L97.4 160.4z" fill="#cfcac4" stroke="#6e6862" stroke-width=".7"/>
    <ellipse cx="56.5" cy="150.3" rx="1.200" ry="2.400" fill="#6b4a36"/>
    <ellipse cx="68.0" cy="155.1" rx="1.200" ry="2.400" fill="#6b4a36"/>
    <ellipse cx="81.5" cy="157.4" rx="1.200" ry="2.400" fill="#6b4a36"/>
    <ellipse cx="123.3" cy="154.4" rx="1.200" ry="2.400" fill="#6b4a36"/>
  </svg>
  <div class="tip" style="left:21.700px;top:311.500px">?</div>
  <div class="abs" style="left:11px;top:348px;line-height:19px;white-space:nowrap">Click the image to edit or update</div>
  <div class="abs" style="left:11px;top:386px;line-height:19px;white-space:nowrap"><a style="color:#b32d2e">Remove product image</a></div>
</div>

<div class="postbox side" style="left:1614px;top:918px;width:280px;height:84px">
  <div class="ph">Product gallery
    <svg class="abs" style="left:207px;top:11.600px" width="14" height="12" viewBox="0 0 14 12"><path d="M1.500 9.500L7 3.500l5.500 6" fill="none" stroke="#787c82" stroke-width="2"/></svg>
    <svg class="abs" style="left:232.500px;top:11.600px" width="14" height="12" viewBox="0 0 14 12"><path d="M1.500 2.500L7 8.500l5.500-6" fill="none" stroke="#787c82" stroke-width="2"/></svg>
    <svg class="abs" style="left:261.700px;top:14px" width="7.500" height="5.800" viewBox="0 0 9 7"><path d="M0 7L4.500 .5 9 7z" fill="#50575e"/></svg>
  </div>
  <div class="abs" style="left:13px;top:50px;line-height:19px;white-space:nowrap"><a>Add product gallery images</a></div>
  <div class="tip" style="left:181.700px;top:53px">?</div>
</div>

<div class="postbox side" style="left:1614px;top:1022px;width:280px;height:37px">
  <div class="ph closed">Product categories
    <svg class="abs" style="left:207px;top:11.600px" width="14" height="12" viewBox="0 0 14 12"><path d="M1.500 9.500L7 3.500l5.500 6" fill="none" stroke="#787c82" stroke-width="2"/></svg>
    <svg class="abs" style="left:232.500px;top:11.600px" width="14" height="12" viewBox="0 0 14 12"><path d="M1.500 2.500L7 8.500l5.500-6" fill="none" stroke="#787c82" stroke-width="2"/></svg>
    <svg class="abs" style="left:261.700px;top:15px" width="7.500" height="5.800" viewBox="0 0 9 7"><path d="M0 0L4.500 6.500 9 0z" fill="#50575e"/></svg>
  </div>
</div>
<div class="postbox side" style="left:1614px;top:1078px;width:280px;height:38px">
  <div class="ph closed">Product tags
    <svg class="abs" style="left:207px;top:11.600px" width="14" height="12" viewBox="0 0 14 12"><path d="M1.500 9.500L7 3.500l5.500 6" fill="none" stroke="#787c82" stroke-width="2"/></svg>
    <svg class="abs" style="left:232.500px;top:11.600px" width="14" height="12" viewBox="0 0 14 12"><path d="M1.500 2.500L7 8.500l5.500-6" fill="none" stroke="#787c82" stroke-width="2"/></svg>
    <svg class="abs" style="left:261.700px;top:15px" width="7.500" height="5.800" viewBox="0 0 9 7"><path d="M0 0L4.500 6.500 9 0z" fill="#50575e"/></svg>
  </div>
</div>

<!--PD-START-->
<!-- ============ PRODUCT DATA ============ -->
<div class="postbox" style="left:179.700px;top:770px;width:1415px;height:1774px">
<div class="abs" style="left:0;top:0;width:1413px;height:51px;border-bottom:1px solid #c3c4c7"></div>
<div class="abs" style="left:10px;top:14px;font-size:14px;color:#1d2327;line-height:20px;white-space:nowrap"><b>Product data</b> &mdash;</div>
<div class="sel" style="left:120.2px;top:10px;width:210px;height:30px;line-height:28px;color:#2c3338;"><b>Variable product</b><svg viewBox="0 0 20 20"><path d="M5 6l5 5 5-5 2 1-7 7-7-7 2-1z" fill="#50575e"/></svg></div>
<div class="tip" style="left:343.1px;top:17.4px">?</div>
<div class="abs" style="left:368.8px;top:16px;width:1px;height:18px;background:#e0e0e0"></div>
<svg class="abs" style="left:1341.6px;top:17.5px" width="14" height="12" viewBox="0 0 14 12"><path d="M1.500 9.500L7 3.500l5.500 6" fill="none" stroke="#50575e" stroke-width="2"/></svg>
<svg class="abs" style="left:1367.2px;top:17.5px" width="14" height="12" viewBox="0 0 14 12"><path d="M1.500 2.500L7 8.500l5.500-6" fill="none" stroke="#50575e" stroke-width="2"/></svg>
<svg class="abs" style="left:1395.3px;top:19.5px" width="9" height="7" viewBox="0 0 9 7"><path d="M0 7L4.500 .5 9 7z" fill="#50575e"/></svg>
<div class="abs" style="left:0;top:51px;width:283px;height:1721px;background:#fafafa;border-right:1px solid #eee"></div>
<div class="abs" style="left:0;top:51px;width:282px;height:40.800px;border-bottom:1px solid #eee;background:transparent;color:#2271b1;font-size:13px;line-height:20px;padding:10.500px 0 9.500px 30.600px;white-space:nowrap"><svg class="abs" style="left:8.500px;top:12px;fill:#2271b1" width="13" height="13" viewBox="0 0 20 20"><path d="M16.680 9.770c-1.340 1.340-3.300 1.670-4.950.99l-5.410 6.520c-.99.99-2.590.99-3.580 0s-.99-2.590 0-3.570l6.520-5.420c-.68-1.650-.35-3.610.99-4.950 1.280-1.280 3.120-1.620 4.720-1.060l-2.890 2.890 2.820 2.820 2.860-2.870c.53 1.580.18 3.390-1.080 4.650z"/></svg>General</div>
<div class="abs" style="left:0;top:91.8px;width:282px;height:40.800px;border-bottom:1px solid #eee;background:transparent;color:#2271b1;font-size:13px;line-height:20px;padding:10.500px 0 9.500px 30.600px;white-space:nowrap"><svg class="abs" style="left:8.500px;top:12px;fill:#2271b1" width="13" height="13" viewBox="0 0 20 20"><path d="M10.500 1.200l8.300 8.300-8.300 9.300L1.200 9.500zM10.300 4.400a1.300 1.300 0 1 0 .01 0z" fill-rule="evenodd"/><path d="M6 10l5-5M8 12l5-5M10 14l5-5" stroke="#fafafa" stroke-width=".8" fill="none"/></svg>Inventory</div>
<div class="abs" style="left:0;top:132.6px;width:282px;height:40.800px;border-bottom:1px solid #eee;background:transparent;color:#2271b1;font-size:13px;line-height:20px;padding:10.500px 0 9.500px 30.600px;white-space:nowrap"><svg class="abs" style="left:8.500px;top:12px;fill:#2271b1" width="13" height="13" viewBox="0 0 20 20"><path d="M0 3h12.500v11H0zM13.500 6h3.500l3 4v4h-6.500zM2.500 14.500a2.300 2.300 0 1 0 4.600 0zM13.500 14.500a2.300 2.300 0 1 0 4.600 0z"/></svg>Shipping</div>
<div class="abs" style="left:0;top:173.4px;width:282px;height:40.800px;border-bottom:1px solid #eee;background:transparent;color:#2271b1;font-size:13px;line-height:20px;padding:10.500px 0 9.500px 30.600px;white-space:nowrap"><svg class="abs" style="left:8.500px;top:12px;fill:#2271b1" width="13" height="13" viewBox="0 0 20 20"><path d="M17.740 2.760c1.680 1.690 1.680 4.410 0 6.100l-1.530 1.520c-1.120 1.120-2.700 1.470-4.140 1.090l2.620-2.610.76-.77.760-.76c.84-.84.84-2.200 0-3.040-.84-.85-2.200-.85-3.040 0l-.77.760-3.380 3.380c-.37-1.440-.02-3.020 1.100-4.140l1.520-1.530c1.690-1.680 4.420-1.680 6.100 0zM8.590 13.430l5.340-5.340c.42-.42.420-1.100 0-1.520-.44-.43-1.130-.39-1.530 0l-5.330 5.340c-.42.42-.42 1.100 0 1.520.44.430 1.130.39 1.520 0zm-.76 2.290l4.140-4.150c.38 1.440.03 3.020-1.090 4.140l-1.520 1.530c-1.690 1.680-4.410 1.680-6.100 0-1.680-1.680-1.680-4.420 0-6.100l1.530-1.520c1.120-1.120 2.700-1.470 4.140-1.100l-4.140 4.150c-.85.84-.85 2.200 0 3.050.84.840 2.200.840 3.040 0z"/></svg>Linked Products</div>
<div class="abs" style="left:0;top:214.2px;width:282px;height:40.800px;border-bottom:1px solid #eee;background:transparent;color:#2271b1;font-size:13px;line-height:20px;padding:10.500px 0 9.500px 30.600px;white-space:nowrap"><svg class="abs" style="left:8.500px;top:12px;fill:#2271b1" width="13" height="13" viewBox="0 0 20 20"><path d="M1 3h18v14H1zM3 7v8h14V7zM4.500 8.500h4v5h-4zM10 8.500h5.500v1.500H10zM10 11.500h5.500V13H10z" fill-rule="evenodd"/></svg>Attributes</div>
<div class="abs" style="left:0;top:255.0px;width:283px;height:40.800px;border-bottom:1px solid #eee;background:#eee;color:#555;font-size:13px;line-height:20px;padding:10.500px 0 9.500px 30.600px;white-space:nowrap"><svg class="abs" style="left:8.500px;top:12px;fill:#555" width="13" height="13" viewBox="0 0 20 20"><path d="M2.500 2.500h15v15h-15zM10 2.500v15M2.500 10h15" fill="none" stroke="#555" stroke-width="1.700"/></svg>Variations</div>
<div class="abs" style="left:0;top:295.8px;width:282px;height:40.800px;border-bottom:1px solid #eee;background:transparent;color:#2271b1;font-size:13px;line-height:20px;padding:10.500px 0 9.500px 30.600px;white-space:nowrap"><svg class="abs" style="left:8.500px;top:12px;fill:#2271b1" width="13" height="13" viewBox="0 0 20 20"><path d="M18 12h-2.180c-.17.700-.44 1.350-.81 1.930l1.540 1.540-2.100 2.100-1.540-1.540c-.58.360-1.230.630-1.910.790V19H8v-2.180c-.68-.16-1.330-.43-1.910-.79l-1.540 1.540-2.120-2.120 1.540-1.540c-.36-.58-.63-1.230-.79-1.910H1V9.030h2.170c.16-.7.440-1.350.8-1.940L2.430 5.550l2.100-2.100 1.540 1.540c.58-.37 1.240-.64 1.930-.81V2h3v2.180c.68.160 1.330.43 1.910.79l1.540-1.540 2.120 2.120-1.540 1.540c.36.590.64 1.240.8 1.940H18V12zm-8.500 1.500c1.660 0 3-1.340 3-3s-1.340-3-3-3-3 1.340-3 3 1.340 3 3 3z"/></svg>Advanced</div>
<div class="abs" style="left:0;top:336.6px;width:282px;height:40.800px;border-bottom:1px solid #eee;background:transparent;color:#2271b1;font-size:13px;line-height:20px;padding:10.500px 0 9.500px 30.600px;white-space:nowrap"><svg class="abs" style="left:8.500px;top:12px;fill:#2271b1" width="13" height="13" viewBox="0 0 20 20"><path d="M13.110 4.360L9.870 7.600 8 5.730l3.240-3.240c.35-.34 1.050-.2 1.560.32.52.51.66 1.210.31 1.550zm-8 1.770l.91-1.120 9.010 9.010-1.190.84c-.71.71-2.630 1.160-3.820 1.160H6.140L4.900 17.260c-.59.59-1.540.59-2.120 0-.59-.58-.59-1.530 0-2.120l1.240-1.240v-3.880c0-1.130.4-3.190 1.090-3.890zm7.260 3.970l3.240-3.240c.34-.35 1.040-.21 1.550.31.52.51.66 1.210.31 1.550l-3.240 3.250z"/></svg>Get more options</div>
<div class="abs" style="left:283px;top:51px;width:1130px;height:54px;border-bottom:1px solid #eee"></div>
<div class="abs" style="left:295px;top:67px;font-size:13px;color:#3c434a;line-height:20px;white-space:nowrap"><b>Default Form Values:</b></div>
<div class="tip" style="left:429.3px;top:71.7px">?</div>
<div class="sel" style="left:446.6px;top:63px;width:157px;height:30px;line-height:28px;">No default Length&hellip;<svg viewBox="0 0 20 20"><path d="M5 6l5 5 5-5 2 1-7 7-7-7 2-1z" fill="#50575e"/></svg></div>
<div class="sel" style="left:611.3px;top:63px;width:234px;height:30px;line-height:28px;">No default Test Attribute Color&hellip;<svg viewBox="0 0 20 20"><path d="M5 6l5 5 5-5 2 1-7 7-7-7 2-1z" fill="#50575e"/></svg></div>
<div class="abs" style="left:283px;top:105px;width:1130px;height:54px;border-bottom:1px solid #eee"></div>
<div class="btn" style="left:295px;top:117px;width:144px;height:30px">Regenerate variations</div>
<div class="btn" style="left:446.2px;top:117px;width:100px;height:30px">Add manually</div>
<div class="sel" style="left:552.4px;top:117px;width:131px;height:30px;line-height:28px;">Bulk actions<svg viewBox="0 0 20 20"><path d="M5 6l5 5 5-5 2 1-7 7-7-7 2-1z" fill="#50575e"/></svg></div>
<div class="abs" style="right:14.500px;top:118.80000000000001px;font-size:11.500px;font-style:italic;line-height:20px;color:#777;white-space:nowrap">9 variations (<span style="color:#2271b1">Expand</span> / <span style="color:#2271b1">Close</span>)</div>
<div class="abs" style="left:283px;top:158px;width:1130px;height:49px;border-bottom:1px solid #eee"></div>
<div class="abs" style="left:295px;top:174px;font-size:13px;color:#1d2327;line-height:20px;white-space:nowrap;font-weight:bold;letter-spacing:-.1px">#1555</div>
<div class="sel" style="left:336.9px;top:168.3px;width:118px;height:30px;line-height:28px;font-size:13.500px;">S<svg viewBox="0 0 20 20"><path d="M5 6l5 5 5-5 2 1-7 7-7-7 2-1z" fill="#50575e"/></svg></div>
<div class="sel" style="left:461.6px;top:168.3px;width:196px;height:30px;line-height:28px;font-size:13.500px;">Black<svg viewBox="0 0 20 20"><path d="M5 6l5 5 5-5 2 1-7 7-7-7 2-1z" fill="#50575e"/></svg></div>
<svg class="abs" style="left:1282.8px;top:180px" width="10" height="9" viewBox="0 0 10 9"><path d="M0 1.200h10M0 4.500h10M0 7.800h10" stroke="#b4b4b4" stroke-width="1.900"/></svg>
<div class="abs" style="left:1310.6px;top:174.3px;font-size:12.500px;color:#f5222d;line-height:20px">Remove</div>
<div class="abs" style="left:1369.6px;top:174.3px;font-size:12.500px;color:#2271b1;line-height:20px">Edit</div>
<div class="abs" style="left:283px;top:207px;width:1130px;height:1109px;background:#fdfdfd;border-bottom:1px solid #eee"></div>
<svg class="abs" style="left:314.3px;top:246.9px" width="115" height="115" viewBox="0 0 115 115"><rect width="114.600" height="114.600" rx="6.500" fill="#2271b1"/><rect x="12.800" y="12.800" width="89.600" height="89.600" fill="#fff"/><circle cx="44.700" cy="31.900" r="12.800" fill="#2271b1"/><path d="M19.300 44.500C28 46 35 58 38.400 69.600 42 60 50 51.200 57.300 51.200 65 51.200 72 57 76.200 63.400 77 40 85 27 95.700 25.600V91q0 5.300-5 5.300H24.300q-5 0-5-5.300z" fill="#2271b1"/></svg>
<div class="lbl" style="left:869px;top:239.1px;"><span style="border-bottom:1px dotted #50575e">SKU</span></div>
<div class="tip" style="left:1373.3px;top:237.5px">?</div>
<div class="inp" style="left:869px;top:258.5px;width:518px;height:40px;line-height:39px;padding:0 4.500px;font-size:13px;color:#50575e;">woo-belt</div>
<div class="lbl" style="left:869px;top:315.4px;"><span style="border-bottom:1px dotted #50575e">GTIN</span>, <span style="border-bottom:1px dotted #50575e">UPC</span>, <span style="border-bottom:1px dotted #50575e">EAN</span>, or <span style="border-bottom:1px dotted #50575e">ISBN</span></div>
<div class="tip" style="left:1373.3px;top:314.3px">?</div>
<div class="inp" style="left:869px;top:334.5px;width:518px;height:40px;line-height:39px;padding:0 4.500px;font-size:13px;color:#50575e;"></div>
<div class="abs" style="left:308px;top:399.8px;width:1079px;height:35px;border-top:1px solid #eee;border-bottom:1px solid #eee"></div>
<div class="cb" style="left:315.6px;top:408.8px"><svg viewBox="0 0 20 20"><path d="M14.830 4.890l1.340.94-5.810 8.380H9.020L5.780 9.670l1.340-1.250 2.570 2.400z" fill="#3582c4"/></svg></div>
<div class="lbl" style="left:336.6px;top:409.8px;">Enabled</div>
<div class="cb" style="left:404.7px;top:408.8px"></div>
<div class="lbl" style="left:426.2px;top:409.8px;">Downloadable</div>
<div class="cb" style="left:531.7px;top:408.8px"></div>
<div class="lbl" style="left:552.9px;top:409.8px;">Virtual</div>
<div class="cb" style="left:613.1px;top:408.8px"></div>
<div class="lbl" style="left:634.9px;top:409.8px;">Manage stock?</div>
<div class="lbl" style="left:308px;top:464.2px;">Regular price ($)</div>
<div class="inp" style="left:308px;top:483.8px;width:518px;height:40px;line-height:39px;padding:0 4.500px;font-size:13px;color:#50575e;">20</div>
<div class="lbl" style="left:869px;top:464.2px;">Sale price ($) <a>Schedule</a></div>
<div class="inp" style="left:869px;top:483.8px;width:518px;height:40px;line-height:39px;padding:0 4.500px;font-size:13px;color:#50575e;"></div>
<div class="lbl" style="left:308px;top:554.4px;">Weight (kg)</div>
<div class="tip" style="left:812.8px;top:552.1px">?</div>
<div class="inp" style="left:308px;top:572.4px;width:518px;height:40px;line-height:39px;padding:0 4.500px;font-size:13px;color:#50575e;"></div>
<div class="lbl" style="left:869px;top:554.4px;color:#777;">Dimensions (L&times;W&times;H) (cm)</div>
<div class="tip" style="left:1373.3px;top:552.1px">?</div>
<div class="inp" style="left:869px;top:572.4px;width:171px;height:40px;line-height:39px;padding:0 4.500px;font-size:13px;color:#50575e;color:#72777c;font-size:13.500px;">Length</div>
<div class="inp" style="left:1040px;top:572.4px;width:171px;height:40px;line-height:39px;padding:0 4.500px;font-size:13px;color:#50575e;color:#72777c;font-size:13.500px;">Width</div>
<div class="inp" style="left:1211px;top:572.4px;width:176px;height:40px;line-height:39px;padding:0 4.500px;font-size:13px;color:#50575e;color:#72777c;font-size:13.500px;">Height</div>
<div class="lbl" style="left:308px;top:630.3px;">Shipping class</div>
<div class="sel" style="left:308px;top:650.2px;width:1079px;height:40px;line-height:38px;padding-left:5px;font-size:13px;">Same as parent<svg viewBox="0 0 20 20"><path d="M5 6l5 5 5-5 2 1-7 7-7-7 2-1z" fill="#50575e"/></svg></div>
<div class="lbl" style="left:308px;top:705.8px;">Tax class</div>
<div class="tip" style="left:1373.3px;top:704.5px">?</div>
<div class="sel" style="left:308px;top:724.8px;width:1079px;height:40px;line-height:38px;padding-left:5px;font-size:13px;">Same as parent<svg viewBox="0 0 20 20"><path d="M5 6l5 5 5-5 2 1-7 7-7-7 2-1z" fill="#50575e"/></svg></div>
<div class="lbl" style="left:308px;top:781.3px;">Description</div>
<div class="tip" style="left:1373.3px;top:780.0px">?</div>
<div class="inp" style="left:308px;top:802.6px;width:1079px;height:51px;line-height:50px;padding:0 4.500px;font-size:13px;color:#50575e;"></div>
<svg class="abs" style="left:1375px;top:841.6px" width="10" height="10" viewBox="0 0 10 10"><path d="M9 1L1 9M9 5L5 9" stroke="#777" stroke-width="1"/></svg>
<div class="abs" style="left:308px;top:867.3px;width:1079px;height:415px;background:#f9f9f9;border:1px solid #e8e8e8"></div>
<div class="cb" style="left:329.7px;top:900.1px"><svg viewBox="0 0 20 20"><path d="M14.830 4.890l1.340.94-5.810 8.380H9.020L5.780 9.670l1.340-1.250 2.570 2.400z" fill="#3582c4"/></svg></div>
<div class="lbl" style="left:351.5px;top:901.1px;font-size:13px;">Enable Product Quantity</div>
<svg class="abs" style="left:327.4px;top:910.6999999999999px" width="23" height="26.500" viewBox="0 0 20 23"><path d="M6 1.200c1 0 1.800.8 1.800 1.800v5.500l.8-.1c.8-.1 1.500.3 1.800 1 .9-.3 1.900.1 2.300.9 1-.2 2 .4 2.300 1.400.5 1.800.6 3.800-.1 5.600-.4 1.100-.9 2-1 2.900H7.500c-.4-1.100-1.400-2.200-2.500-3.200C3.600 15.700 1.800 14.200 1.600 12.700c-.1-1 1-1.500 1.800-1l.8.6V3c0-1 .8-1.800 1.800-1.800z" fill="#fff" stroke="#000" stroke-width="1.200"/><path d="M8.300 12v4.500M10.800 12v4.500M13.300 12.500v4" stroke="#000" stroke-width="1"/></svg>
<div class="lbl" style="left:323.7px;top:934.9px;font-size:13px;">Quantity Type</div>
<div class="sel" style="left:323.7px;top:957.0px;width:995.2px;height:40px;line-height:38px;padding-left:5px;font-size:13px;">Default Quantity<svg viewBox="0 0 20 20"><path d="M5 6l5 5 5-5 2 1-7 7-7-7 2-1z" fill="#50575e"/></svg></div>
<div class="lbl" style="left:323.7px;top:1019.8999999999999px;font-size:13px;">Minimum Quantity</div>
<div class="tip" style="left:443.5px;top:1020.1px">?</div>
<div class="inp" style="left:323.7px;top:1040.2px;width:995.2px;height:40px;line-height:39px;padding:0 4.500px;font-size:13px;color:#50575e;padding-left:5px;">0</div>
<div class="lbl" style="left:323.7px;top:1103.8999999999999px;font-size:13px;">Maximum Quantity</div>
<div class="tip" style="left:445.8px;top:1104.1px">?</div>
<div class="inp" style="left:323.7px;top:1125.2px;width:995.2px;height:40px;line-height:39px;padding:0 4.500px;font-size:13px;color:#50575e;padding-left:5px;">0</div>
<div class="lbl" style="left:323.7px;top:1188.3999999999999px;font-size:13px;">Display Type</div>
<div class="tip" style="left:410.3px;top:1188.6px">?</div>
<div class="sel" style="left:323.7px;top:1209.2px;width:995.2px;height:40px;line-height:38px;padding-left:5px;font-size:13px;">Default<svg viewBox="0 0 20 20"><path d="M5 6l5 5 5-5 2 1-7 7-7-7 2-1z" fill="#50575e"/></svg></div>
<div class="abs" style="left:283px;top:1316px;width:1130px;height:51px;border-bottom:1px solid #eee"></div>
<div class="abs" style="left:295px;top:1332px;font-size:13px;color:#1d2327;line-height:20px;white-space:nowrap;font-weight:bold;letter-spacing:-.1px">#1556</div>
<div class="sel" style="left:336.9px;top:1326.3px;width:118px;height:30px;line-height:28px;font-size:13.500px;">S<svg viewBox="0 0 20 20"><path d="M5 6l5 5 5-5 2 1-7 7-7-7 2-1z" fill="#50575e"/></svg></div>
<div class="sel" style="left:461.6px;top:1326.3px;width:196px;height:30px;line-height:28px;font-size:13.500px;">Brown<svg viewBox="0 0 20 20"><path d="M5 6l5 5 5-5 2 1-7 7-7-7 2-1z" fill="#50575e"/></svg></div>
<svg class="abs" style="left:1282.8px;top:1338px" width="10" height="9" viewBox="0 0 10 9"><path d="M0 1.200h10M0 4.500h10M0 7.800h10" stroke="#b4b4b4" stroke-width="1.900"/></svg>
<div class="abs" style="left:1310.6px;top:1332.3px;font-size:12.500px;color:#f5222d;line-height:20px">Remove</div>
<div class="abs" style="left:1369.6px;top:1332.3px;font-size:12.500px;color:#2271b1;line-height:20px">Edit</div>
<div class="abs" style="left:283px;top:1367px;width:1130px;height:51px;border-bottom:1px solid #eee"></div>
<div class="abs" style="left:295px;top:1383px;font-size:13px;color:#1d2327;line-height:20px;white-space:nowrap;font-weight:bold;letter-spacing:-.1px">#1557</div>
<div class="sel" style="left:336.9px;top:1377.3px;width:118px;height:30px;line-height:28px;font-size:13.500px;">S<svg viewBox="0 0 20 20"><path d="M5 6l5 5 5-5 2 1-7 7-7-7 2-1z" fill="#50575e"/></svg></div>
<div class="sel" style="left:461.6px;top:1377.3px;width:196px;height:30px;line-height:28px;font-size:13.500px;">Gray<svg viewBox="0 0 20 20"><path d="M5 6l5 5 5-5 2 1-7 7-7-7 2-1z" fill="#50575e"/></svg></div>
<svg class="abs" style="left:1282.8px;top:1389px" width="10" height="9" viewBox="0 0 10 9"><path d="M0 1.200h10M0 4.500h10M0 7.800h10" stroke="#b4b4b4" stroke-width="1.900"/></svg>
<div class="abs" style="left:1310.6px;top:1383.3px;font-size:12.500px;color:#f5222d;line-height:20px">Remove</div>
<div class="abs" style="left:1369.6px;top:1383.3px;font-size:12.500px;color:#2271b1;line-height:20px">Edit</div>
<div class="abs" style="left:283px;top:1418px;width:1130px;height:51px;border-bottom:1px solid #eee"></div>
<div class="abs" style="left:295px;top:1434px;font-size:13px;color:#1d2327;line-height:20px;white-space:nowrap;font-weight:bold;letter-spacing:-.1px">#1558</div>
<div class="sel" style="left:336.9px;top:1428.3px;width:118px;height:30px;line-height:28px;font-size:13.500px;">M<svg viewBox="0 0 20 20"><path d="M5 6l5 5 5-5 2 1-7 7-7-7 2-1z" fill="#50575e"/></svg></div>
<div class="sel" style="left:461.6px;top:1428.3px;width:196px;height:30px;line-height:28px;font-size:13.500px;">Black<svg viewBox="0 0 20 20"><path d="M5 6l5 5 5-5 2 1-7 7-7-7 2-1z" fill="#50575e"/></svg></div>
<svg class="abs" style="left:1282.8px;top:1440px" width="10" height="9" viewBox="0 0 10 9"><path d="M0 1.200h10M0 4.500h10M0 7.800h10" stroke="#b4b4b4" stroke-width="1.900"/></svg>
<div class="abs" style="left:1310.6px;top:1434.3px;font-size:12.500px;color:#f5222d;line-height:20px">Remove</div>
<div class="abs" style="left:1369.6px;top:1434.3px;font-size:12.500px;color:#2271b1;line-height:20px">Edit</div>
<div class="abs" style="left:283px;top:1469px;width:1130px;height:50px;border-bottom:1px solid #eee"></div>
<div class="abs" style="left:295px;top:1485px;font-size:13px;color:#1d2327;line-height:20px;white-space:nowrap;font-weight:bold;letter-spacing:-.1px">#1559</div>
<div class="sel" style="left:336.9px;top:1479.3px;width:118px;height:30px;line-height:28px;font-size:13.500px;">M<svg viewBox="0 0 20 20"><path d="M5 6l5 5 5-5 2 1-7 7-7-7 2-1z" fill="#50575e"/></svg></div>
<div class="sel" style="left:461.6px;top:1479.3px;width:196px;height:30px;line-height:28px;font-size:13.500px;">Brown<svg viewBox="0 0 20 20"><path d="M5 6l5 5 5-5 2 1-7 7-7-7 2-1z" fill="#50575e"/></svg></div>
<svg class="abs" style="left:1282.8px;top:1491px" width="10" height="9" viewBox="0 0 10 9"><path d="M0 1.200h10M0 4.500h10M0 7.800h10" stroke="#b4b4b4" stroke-width="1.900"/></svg>
<div class="abs" style="left:1310.6px;top:1485.3px;font-size:12.500px;color:#f5222d;line-height:20px">Remove</div>
<div class="abs" style="left:1369.6px;top:1485.3px;font-size:12.500px;color:#2271b1;line-height:20px">Edit</div>
<div class="abs" style="left:283px;top:1519px;width:1130px;height:51px;border-bottom:1px solid #eee"></div>
<div class="abs" style="left:295px;top:1535px;font-size:13px;color:#1d2327;line-height:20px;white-space:nowrap;font-weight:bold;letter-spacing:-.1px">#1560</div>
<div class="sel" style="left:336.9px;top:1529.3px;width:118px;height:30px;line-height:28px;font-size:13.500px;">M<svg viewBox="0 0 20 20"><path d="M5 6l5 5 5-5 2 1-7 7-7-7 2-1z" fill="#50575e"/></svg></div>
<div class="sel" style="left:461.6px;top:1529.3px;width:196px;height:30px;line-height:28px;font-size:13.500px;">Gray<svg viewBox="0 0 20 20"><path d="M5 6l5 5 5-5 2 1-7 7-7-7 2-1z" fill="#50575e"/></svg></div>
<svg class="abs" style="left:1282.8px;top:1541px" width="10" height="9" viewBox="0 0 10 9"><path d="M0 1.200h10M0 4.500h10M0 7.800h10" stroke="#b4b4b4" stroke-width="1.900"/></svg>
<div class="abs" style="left:1310.6px;top:1535.3px;font-size:12.500px;color:#f5222d;line-height:20px">Remove</div>
<div class="abs" style="left:1369.6px;top:1535.3px;font-size:12.500px;color:#2271b1;line-height:20px">Edit</div>
<div class="abs" style="left:283px;top:1570px;width:1130px;height:51px;border-bottom:1px solid #eee"></div>
<div class="abs" style="left:295px;top:1586px;font-size:13px;color:#1d2327;line-height:20px;white-space:nowrap;font-weight:bold;letter-spacing:-.1px">#1561</div>
<div class="sel" style="left:336.9px;top:1580.3px;width:118px;height:30px;line-height:28px;font-size:13.500px;">L<svg viewBox="0 0 20 20"><path d="M5 6l5 5 5-5 2 1-7 7-7-7 2-1z" fill="#50575e"/></svg></div>
<div class="sel" style="left:461.6px;top:1580.3px;width:196px;height:30px;line-height:28px;font-size:13.500px;">Black<svg viewBox="0 0 20 20"><path d="M5 6l5 5 5-5 2 1-7 7-7-7 2-1z" fill="#50575e"/></svg></div>
<svg class="abs" style="left:1282.8px;top:1592px" width="10" height="9" viewBox="0 0 10 9"><path d="M0 1.200h10M0 4.500h10M0 7.800h10" stroke="#b4b4b4" stroke-width="1.900"/></svg>
<div class="abs" style="left:1310.6px;top:1586.3px;font-size:12.500px;color:#f5222d;line-height:20px">Remove</div>
<div class="abs" style="left:1369.6px;top:1586.3px;font-size:12.500px;color:#2271b1;line-height:20px">Edit</div>
<div class="abs" style="left:283px;top:1621px;width:1130px;height:51px;border-bottom:1px solid #eee"></div>
<div class="abs" style="left:295px;top:1637px;font-size:13px;color:#1d2327;line-height:20px;white-space:nowrap;font-weight:bold;letter-spacing:-.1px">#1562</div>
<div class="sel" style="left:336.9px;top:1631.3px;width:118px;height:30px;line-height:28px;font-size:13.500px;">L<svg viewBox="0 0 20 20"><path d="M5 6l5 5 5-5 2 1-7 7-7-7 2-1z" fill="#50575e"/></svg></div>
<div class="sel" style="left:461.6px;top:1631.3px;width:196px;height:30px;line-height:28px;font-size:13.500px;">Brown<svg viewBox="0 0 20 20"><path d="M5 6l5 5 5-5 2 1-7 7-7-7 2-1z" fill="#50575e"/></svg></div>
<svg class="abs" style="left:1282.8px;top:1643px" width="10" height="9" viewBox="0 0 10 9"><path d="M0 1.200h10M0 4.500h10M0 7.800h10" stroke="#b4b4b4" stroke-width="1.900"/></svg>
<div class="abs" style="left:1310.6px;top:1637.3px;font-size:12.500px;color:#f5222d;line-height:20px">Remove</div>
<div class="abs" style="left:1369.6px;top:1637.3px;font-size:12.500px;color:#2271b1;line-height:20px">Edit</div>
<div class="abs" style="left:283px;top:1672px;width:1130px;height:51px;border-bottom:1px solid #eee"></div>
<div class="abs" style="left:295px;top:1688px;font-size:13px;color:#1d2327;line-height:20px;white-space:nowrap;font-weight:bold;letter-spacing:-.1px">#1563</div>
<div class="sel" style="left:336.9px;top:1682.3px;width:118px;height:30px;line-height:28px;font-size:13.500px;">L<svg viewBox="0 0 20 20"><path d="M5 6l5 5 5-5 2 1-7 7-7-7 2-1z" fill="#50575e"/></svg></div>
<div class="sel" style="left:461.6px;top:1682.3px;width:196px;height:30px;line-height:28px;font-size:13.500px;">Gray<svg viewBox="0 0 20 20"><path d="M5 6l5 5 5-5 2 1-7 7-7-7 2-1z" fill="#50575e"/></svg></div>
<svg class="abs" style="left:1282.8px;top:1694px" width="10" height="9" viewBox="0 0 10 9"><path d="M0 1.200h10M0 4.500h10M0 7.800h10" stroke="#b4b4b4" stroke-width="1.900"/></svg>
<div class="abs" style="left:1310.6px;top:1688.3px;font-size:12.500px;color:#f5222d;line-height:20px">Remove</div>
<div class="abs" style="left:1369.6px;top:1688.3px;font-size:12.500px;color:#2271b1;line-height:20px">Edit</div>
<div class="btn pri" style="left:295px;top:1733.1px;width:99px;height:30px">Save changes</div>
<div class="btn" style="left:398.5px;top:1733.1px;width:60px;height:30px">Cancel</div>
<div class="abs" style="right:14.500px;top:1736.8px;font-size:11.500px;font-style:italic;line-height:20px;color:#777;white-space:nowrap">9 variations (<span style="color:#2271b1">Expand</span> / <span style="color:#2271b1">Close</span>)</div>
</div>
<!--PD-END-->

</div>
<div style="position:absolute;left:1495px;top:0;width:1px;height:1999px;background:#fff"></div>
</body>
</html>
